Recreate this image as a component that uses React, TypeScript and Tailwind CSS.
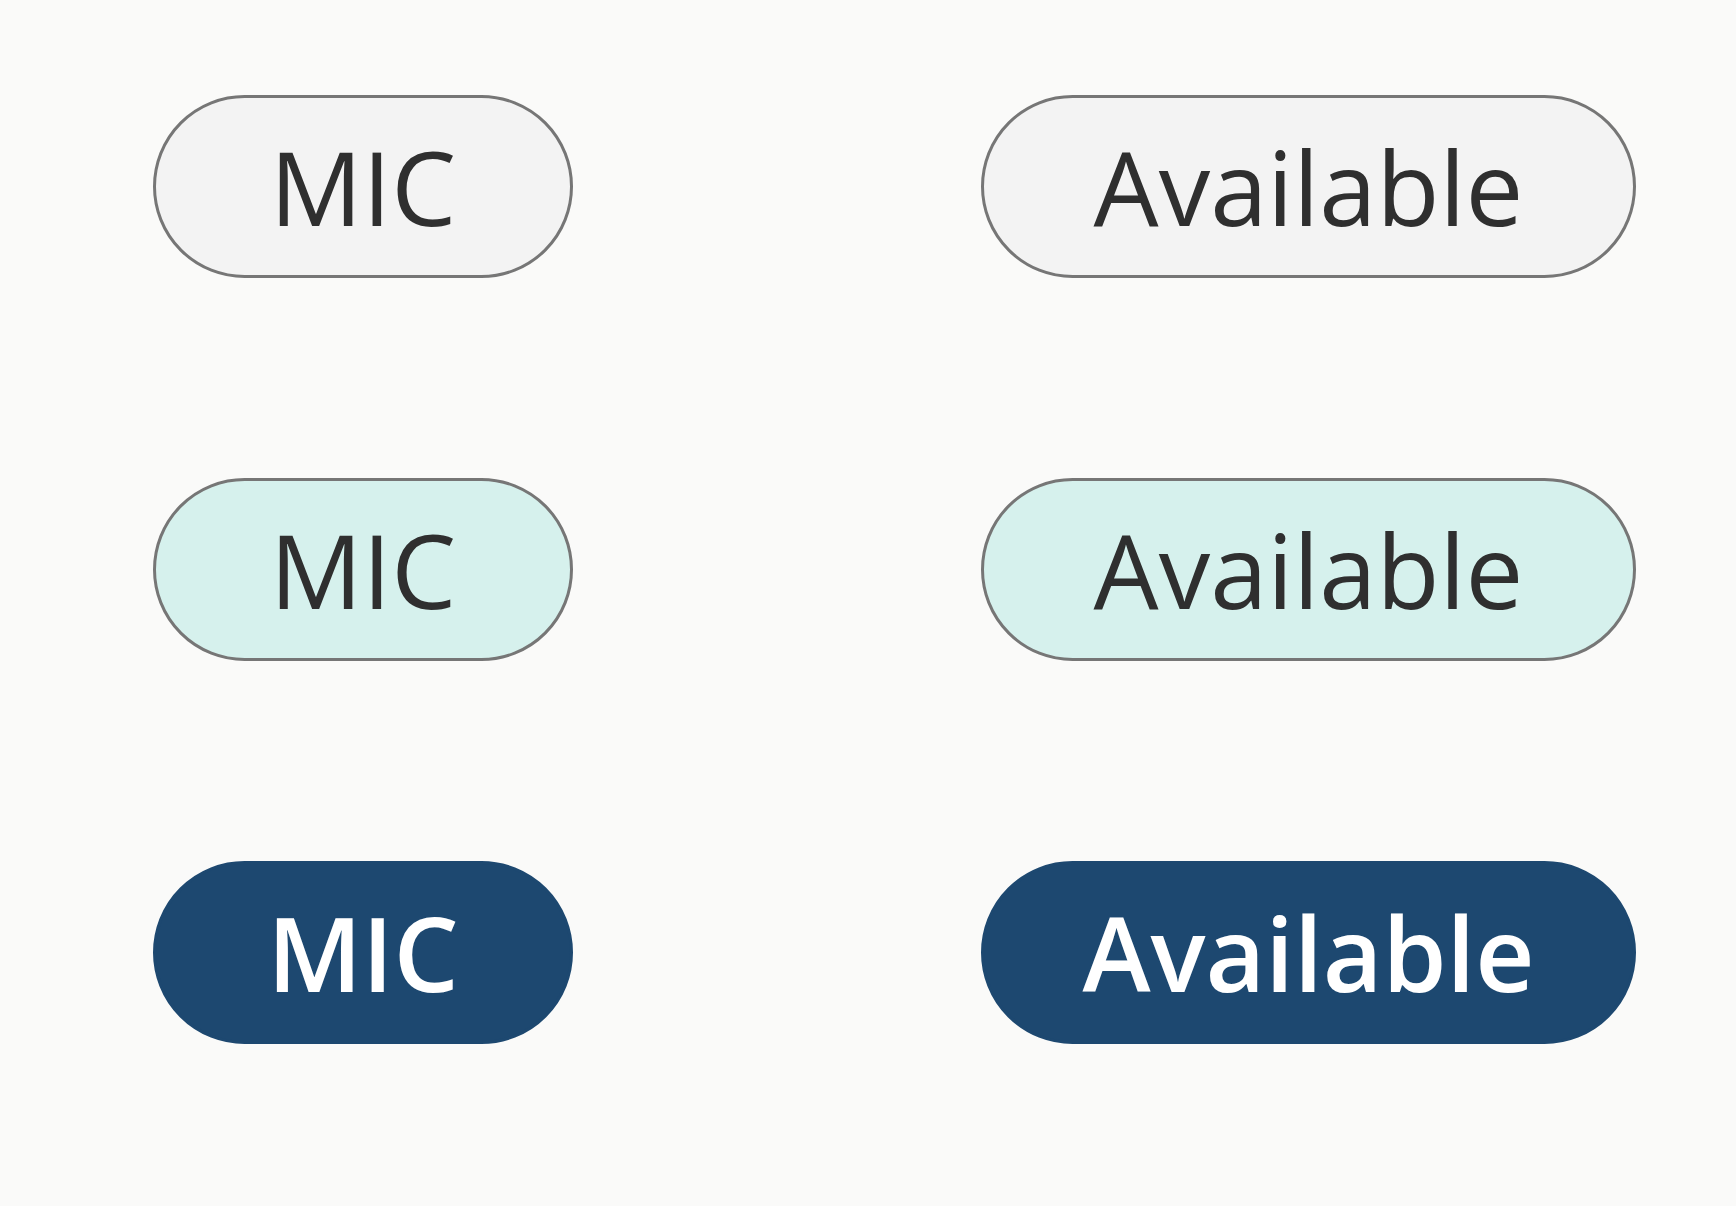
const rows = [
  { tone: "plain" },
  { tone: "teal" },
  { tone: "filled" },
] as const;

type Tone = (typeof rows)[number]["tone"];

function Pill({ label, tone, width }: { label: string; tone: Tone; width: string }) {
  const toneClass =
    tone === "filled"
      ? "bg-[#1d4870] text-white font-semibold border-[3px] border-[#1d4870]"
      : tone === "teal"
      ? "bg-[#d6f1ed] text-[#2f2f2f] border-[3px] border-[#767676]"
      : "bg-[#f3f3f3] text-[#2f2f2f] border-[3px] border-[#767676]";
  return (
    <div
      className={`${width} h-[183px] rounded-full flex items-center justify-center text-[103px] leading-none ${toneClass}`}
    >
      <span>{label}</span>
    </div>
  );
}

export default function App() {
  return (
    <div
      className="min-h-[1206px] w-full bg-[#fafaf9] pt-[95px] pl-[153px]"
      style={{ fontFamily: '"Open Sans", "Noto Sans", sans-serif' }}
    >
      <div className="grid grid-cols-[420px_655px] gap-x-[408px] gap-y-[200px]">
        {rows.map((r) => (
          <>
            <Pill key={r.tone + "-mic"} label="MIC" tone={r.tone} width="w-[420px]" />
            <Pill key={r.tone + "-av"} label="Available" tone={r.tone} width="w-[655px]" />
          </>
        ))}
      </div>
    </div>
  );
}
